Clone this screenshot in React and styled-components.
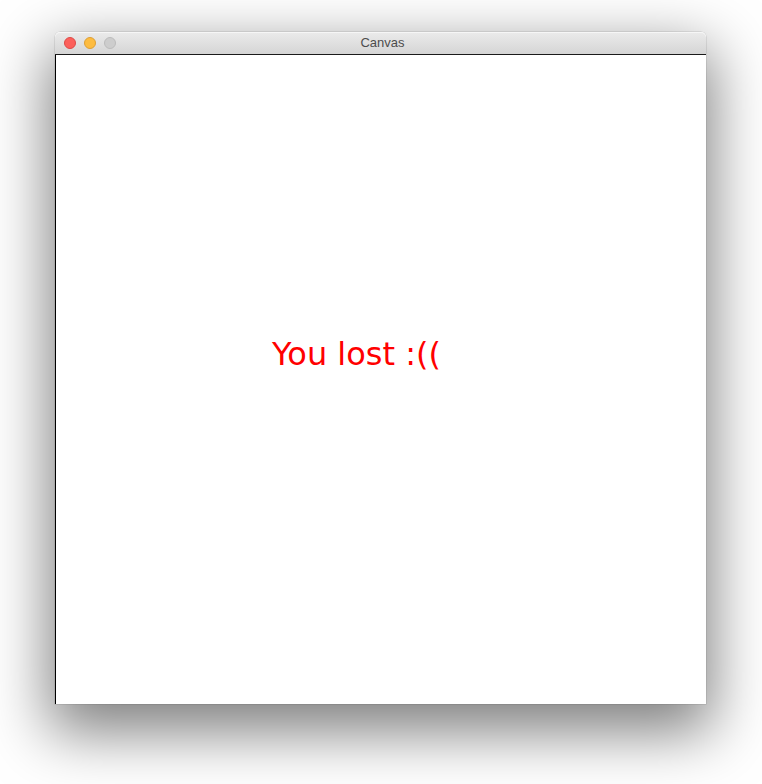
import React from "react";
import styled, { createGlobalStyle } from "styled-components";

const Global = createGlobalStyle`
  html, body { margin: 0; padding: 0; background: #ffffff; }
  #root { width: 762px; height: 784px; }
`;

const Page = styled.div`
  width: 762px;
  height: 784px;
  box-sizing: border-box;
  padding: 32px 0 0 55px;
  display: flex;
  align-items: flex-start;
  overflow: hidden;
`;

const Window = styled.div`
  width: 651px;
  display: flex;
  flex-direction: column;
  border-radius: 5px 5px 0 0;
  box-shadow: 0 22px 60px 6px rgba(0, 0, 0, 0.5), 0 0 0 0.5px rgba(0, 0, 0, 0.15);
  background: #ffffff;
`;

const TitleBar = styled.div`
  position: relative;
  height: 22px;
  display: flex;
  align-items: center;
  justify-content: center;
  padding: 0 9px;
  background: linear-gradient(#ebebeb, #d5d5d5);
  border-radius: 5px 5px 0 0;
  border-bottom: 1px solid #1a1a1a;
  box-shadow: inset 0 1px 0 #f6f6f6;
`;

const Lights = styled.div`
  position: absolute;
  left: 9px;
  top: 5px;
  display: flex;
  gap: 8px;
`;

const Light = styled.span`
  width: 12px;
  height: 12px;
  border-radius: 50%;
  box-sizing: border-box;
  background: ${(p) => p.$color};
  border: 0.5px solid ${(p) => p.$edge};
`;

const Title = styled.span`
  font-family: "Liberation Sans", Arial, sans-serif;
  font-size: 13px;
  color: #4d4d4d;
  line-height: 22px;
  margin-left: 4px;
`;

const Content = styled.div`
  height: 649px;
  border-left: 1px solid #000000;
  background: #ffffff;
  box-sizing: border-box;
  padding: 283px 0 0 216px;
`;

const Message = styled.div`
  font-family: "DejaVu Sans", sans-serif;
  font-size: 32px;
  line-height: 32px;
  color: #ff0000;
  white-space: nowrap;
`;

export default function App() {
  return (
    <>
      <Global />
      <Page>
        <Window>
          <TitleBar>
            <Lights>
              <Light $color="#fc605b" $edge="#de4a46" />
              <Light $color="#fdbc40" $edge="#de9f34" />
              <Light $color="#cdcdcd" $edge="#bcbcbc" />
            </Lights>
            <Title>Canvas</Title>
          </TitleBar>
          <Content>
            <Message>You lost :((</Message>
          </Content>
        </Window>
      </Page>
    </>
  );
}
